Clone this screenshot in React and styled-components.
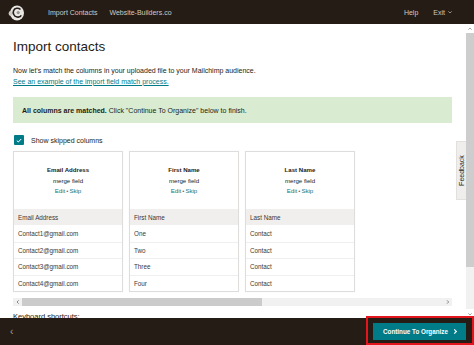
import React from "react";
import styled, { createGlobalStyle } from "styled-components";

const GlobalStyle = createGlobalStyle`
  html, body { margin: 0; padding: 0; width: 474px; height: 345px; overflow: hidden; background: #fff; }
  body { font-family: "Liberation Sans", Arial, sans-serif; color: #241c15; }
  * { box-sizing: border-box; }
`;

const Page = styled.div`
  width: 474px;
  height: 345px;
  display: flex;
  flex-direction: column;
  position: relative;
`;

const TopBar = styled.header`
  height: 24px;
  flex: none;
  background: #241c15;
  display: flex;
  align-items: center;
  padding: 0 10px 0 7px;
`;

const Logo = styled.div`
  width: 18px;
  height: 17px;
  margin-right: 23px;
  display: flex;
`;

const NavLink = styled.span`
  font-size: 7px;
  color: #cfcac4;
  margin-right: ${(p) => p.$gap || 12}px;
  display: inline-flex;
  align-items: center;
  gap: 3px;
`;

const Spacer = styled.div`
  flex: 1;
`;

const Body = styled.div`
  flex: 1;
  display: flex;
  min-height: 0;
  position: relative;
`;

const Content = styled.main`
  flex: 1;
  min-width: 0;
  overflow: hidden;
  padding: 14px 14px 0 13px;
`;

const Title = styled.h1`
  margin: 0;
  font-size: 13.5px;
  line-height: 18px;
  font-weight: 400;
  color: #241c15;
`;

const Description = styled.p`
  margin: 8.5px 0 0;
  font-size: 7px;
  line-height: 11px;
  color: #241c15;
`;

const Link = styled.a`
  color: #007c89;
  text-decoration: underline;
`;

const Banner = styled.div`
  margin-top: 10.5px;
  height: 26px;
  background: #d9ecd1;
  display: flex;
  align-items: center;
  padding: 0 9px;
  font-size: 7px;
  color: #241c15;
  b { font-weight: 700; }
`;

const CheckRow = styled.label`
  margin-top: 11px;
  height: 12px;
  display: flex;
  align-items: center;
  gap: 7px;
  font-size: 7px;
  padding-left: 1px;
`;

const CheckBox = styled.span`
  width: 10px;
  height: 10px;
  background: #007c89;
  border-radius: 1px;
  display: flex;
  align-items: center;
  justify-content: center;
`;

const Cards = styled.div`
  margin-top: 5px;
  display: flex;
  gap: 6px;
`;

const Card = styled.div`
  width: 110px;
  flex: none;
  border: 1px solid #dedddc;
  box-shadow: 0 0 1px rgba(0, 0, 0, 0.05);
  background: #fff;
`;

const CardHeader = styled.div`
  height: 57px;
  padding-top: 13px;
  display: flex;
  flex-direction: column;
  align-items: center;
  font-size: 6.1px;
  line-height: 10.5px;
`;

const FieldName = styled.div`
  font-weight: 700;
`;

const Actions = styled.div`
  color: #007c89;
  span { color: #6b6b6b; margin: 0 1px; }
`;

const Row = styled.div`
  height: ${(p) => (p.$head ? 16 : 16.5)}px;
  display: flex;
  align-items: center;
  padding: 0 4px;
  font-size: 6.3px;
  color: #3d3730;
  background: ${(p) => (p.$head ? "#f0efee" : "#fff")};
  border-top: ${(p) => (p.$first || p.$head ? "none" : "1px solid #f0efee")};
`;

const HScroll = styled.div`
  margin-top: 6px;
  height: 8px;
  background: #f1f1f1;
  display: flex;
  align-items: center;
`;

const ArrowCell = styled.div`
  width: 9px;
  height: 8px;
  flex: none;
  display: flex;
  align-items: center;
  justify-content: center;
`;

const HThumb = styled.div`
  width: 240px;
  height: 8px;
  background: #cbcbcb;
`;

const Shortcuts = styled.div`
  margin-top: 6px;
  font-size: 7.5px;
  line-height: 10px;
  color: #241c15;
`;

const VScroll = styled.div`
  width: 8px;
  flex: none;
  background: #f1f1f1;
  display: flex;
  flex-direction: column;
`;

const VArrow = styled.div`
  height: 9px;
  flex: none;
  background: #fff;
  display: flex;
  align-items: center;
  justify-content: center;
`;

const VThumb = styled.div`
  height: 234px;
  background: #cdcdcd;
`;

const FeedbackTab = styled.div`
  position: absolute;
  right: 8px;
  top: 117px;
  width: 10px;
  height: 59px;
  background: #efeeec;
  border: 1px solid #e2e0dd;
  border-right: none;
  display: flex;
  align-items: center;
  justify-content: center;
`;

const FeedbackText = styled.span`
  transform: rotate(-90deg);
  font-size: 7px;
  color: #241c15;
  white-space: nowrap;
`;

const Footer = styled.footer`
  height: 27px;
  flex: none;
  background: #241c15;
  display: flex;
  align-items: center;
  padding: 0 8px 0 10px;
  position: relative;
`;

const BackButton = styled.span`
  color: #a9a29b;
  font-size: 10px;
  line-height: 1;
`;

const PrimaryButton = styled.button`
  height: 17px;
  width: 93px;
  border: none;
  background: #007c89;
  color: #fff;
  font-family: "Liberation Sans", Arial, sans-serif;
  font-size: 6.3px;
  font-weight: 700;
  display: flex;
  align-items: center;
  justify-content: center;
  gap: 5px;
  padding: 0 0 0 2px;
`;

const Annotation = styled.div`
  position: absolute;
  left: 366px;
  right: 0;
  top: -2px;
  bottom: 0;
  border: 2px solid #e3161e;
  pointer-events: none;
`;

const Chevron = ({ dir = "right", size = 4, color = "#555", w = 1.2 }) => {
  const d = {
    right: "M1.5 0.5 L4 3 L1.5 5.5",
    left: "M4 0.5 L1.5 3 L4 5.5",
    up: "M0.5 4 L3 1.5 L5.5 4",
    down: "M0.5 2 L3 4.5 L5.5 2",
  }[dir];
  return (
    <svg width={size} height={size} viewBox="0 0 6 6">
      <path d={d} fill="none" stroke={color} strokeWidth={w} />
    </svg>
  );
};

const MailchimpLogo = () => (
  <svg width="18" height="17" viewBox="0 0 18 17">
    <ellipse cx="10" cy="9" rx="7" ry="7.5" fill="#e9e7e4" />
    <ellipse cx="3.6" cy="9.5" rx="2" ry="2.4" fill="#cfcac5" />
    <path d="M13.5 5.5 C11.5 3.6 7.8 3.8 6.6 6.6 C5.6 9 6.8 12.4 10 13 C12 13.4 13.6 12.6 14.3 11.4" fill="none" stroke="#241c15" strokeWidth="1.6" />
    <circle cx="11.2" cy="8.6" r="1.6" fill="#9a948e" />
  </svg>
);

const columns = [
  { field: "Email Address", values: ["Contact1@gmail.com", "Contact2@gmail.com", "Contact3@gmail.com", "Contact4@gmail.com"] },
  { field: "First Name", values: ["One", "Two", "Three", "Four"] },
  { field: "Last Name", values: ["Contact", "Contact", "Contact", "Contact"] },
];

export default function App() {
  return (
    <Page>
      <GlobalStyle />
      <TopBar>
        <Logo>
          <MailchimpLogo />
        </Logo>
        <NavLink>Import Contacts</NavLink>
        <NavLink>Website-Builders.co</NavLink>
        <Spacer />
        <NavLink $gap={15}>Help</NavLink>
        <NavLink $gap={0}>
          Exit <Chevron dir="down" size={4} color="#cfcac4" w={1} />
        </NavLink>
      </TopBar>
      <Body>
        <Content>
          <Title>Import contacts</Title>
          <Description>
            Now let’s match the columns in your uploaded file to your Mailchimp audience.
            <br />
            <Link>See an example of the import field match process.</Link>
          </Description>
          <Banner>
            <span>
              <b>All columns are matched.</b> Click "Continue To Organize" below to finish.
            </span>
          </Banner>
          <CheckRow>
            <CheckBox>
              <svg width="6" height="5" viewBox="0 0 6 5">
                <path d="M0.8 2.6 L2.3 4 L5.2 1" fill="none" stroke="#fff" strokeWidth="1" />
              </svg>
            </CheckBox>
            Show skipped columns
          </CheckRow>
          <Cards>
            {columns.map((c) => (
              <Card key={c.field}>
                <CardHeader>
                  <FieldName>{c.field}</FieldName>
                  <div>merge field</div>
                  <Actions>
                    Edit<span>•</span>Skip
                  </Actions>
                </CardHeader>
                <Row $head>{c.field}</Row>
                {c.values.map((v, i) => (
                  <Row key={i} $first={i === 0}>
                    {v}
                  </Row>
                ))}
              </Card>
            ))}
          </Cards>
          <HScroll>
            <ArrowCell>
              <Chevron dir="left" size={4} color="#555" w={1} />
            </ArrowCell>
            <HThumb />
            <Spacer />
            <ArrowCell>
              <Chevron dir="right" size={4} color="#555" w={1} />
            </ArrowCell>
          </HScroll>
          <Shortcuts>Keyboard shortcuts:</Shortcuts>
        </Content>
        <VScroll>
          <VArrow>
            <Chevron dir="up" size={4} color="#777" w={1} />
          </VArrow>
          <VThumb />
          <Spacer />
          <VArrow>
            <Chevron dir="down" size={4} color="#777" w={1} />
          </VArrow>
        </VScroll>
        <FeedbackTab>
          <FeedbackText>Feedback</FeedbackText>
        </FeedbackTab>
      </Body>
      <Footer>
        <BackButton>‹</BackButton>
        <Spacer />
        <PrimaryButton>
          Continue To Organize
          <Chevron dir="right" size={5} color="#fff" w={1.4} />
        </PrimaryButton>
        <Annotation />
      </Footer>
    </Page>
  );
}
